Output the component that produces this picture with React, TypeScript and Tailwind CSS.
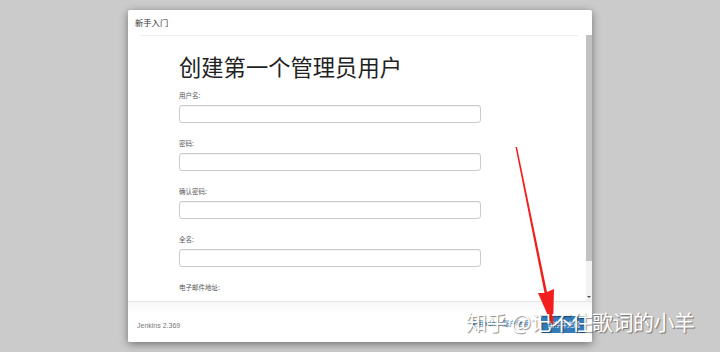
import React from 'react';

const FIELDS = ['用户名:', '密码:', '确认密码:', '全名:', '电子邮件地址:'];

const cjk = { fontFamily: '"Noto Sans CJK SC", "Noto Sans", sans-serif' };

export default function App() {
  return (
    <div className="relative w-[720px] h-[352px] overflow-hidden bg-[#cbcbcb]" style={cjk}>
      <div className="pt-[10px] pl-[128px]">
        <div className="w-[464px] h-[332px] bg-white rounded-[2px] shadow-[0_2px_8px_rgba(0,0,0,0.45)] flex flex-col">
          <div className="h-[25px] flex items-center pl-[7px] text-[8.3px] text-[#333]">新手入门</div>
          <div className="flex-1 flex relative min-h-0">
            <div className="absolute top-0 left-[12px] right-[14px] h-px bg-[#eee]" />
            <div className="flex-1 pl-[51px] pt-[16px] overflow-hidden">
              <h1 className="text-[22.3px] leading-[30px] text-[#222]">创建第一个管理员用户</h1>
              <div className="pt-[9px] flex flex-col gap-[15px]">
                {FIELDS.map((f, i) => (
                  <div key={f}>
                    <div className="text-[6.5px] leading-[10px] text-[#555]">{f}</div>
                    {i < 4 && (
                      <div className="mt-[5px] w-[302px] h-[18px] rounded-[3px] border border-[#ccc] shadow-[inset_0_1px_1px_rgba(0,0,0,0.06)]" />
                    )}
                  </div>
                ))}
              </div>
            </div>
            <div className="w-[6px] bg-[#f1f1f1] flex flex-col">
              <div className="h-[226px] bg-[#c1c1c1]" />
              <div className="flex-1" />
              <div className="h-[8px] flex items-center justify-center">
                <div className="w-0 h-0 border-l-[2px] border-r-[2px] border-t-[2px] border-l-transparent border-r-transparent border-t-[#505050]" />
              </div>
            </div>
          </div>
          <div className="h-[41px] border-t border-[#e5e5e5] bg-gradient-to-b from-[#f7f7f7] to-white to-[30%] flex items-end pb-[9px] pl-[9px] pr-[6px] rounded-b-[2px]">
            <span className="text-[7px] text-[#777] mb-[2px]" style={{ fontFamily: '"Liberation Sans", sans-serif' }}>Jenkins 2.369</span>
            <div className="flex-1" />
            <span className="text-[6.5px] text-[#337ab7] mb-[4px] mr-[12px]">使用admin账户继续</span>
            <div className="w-[45px] h-[17px] bg-[#337ab7] rounded-[2px] text-white text-[6.5px] flex items-center justify-center">保存并完成</div>
          </div>
        </div>
      </div>

      <svg className="absolute left-0 top-0 pointer-events-none" width="720" height="352">
        <polygon points="515.5,147 517,147 547,292 554,289 553,327 538,293 544.5,293" fill="#f21d1d" />
      </svg>

      <div
        className="absolute left-[466px] top-[306px] text-[21px] leading-[30px] text-white whitespace-nowrap tracking-[-0.5px]"
        style={{ textShadow: '1px 1px 1px rgba(0,0,0,0.45)' }}
      >
        知乎 @记不住歌词的小羊
      </div>
    </div>
  );
}
